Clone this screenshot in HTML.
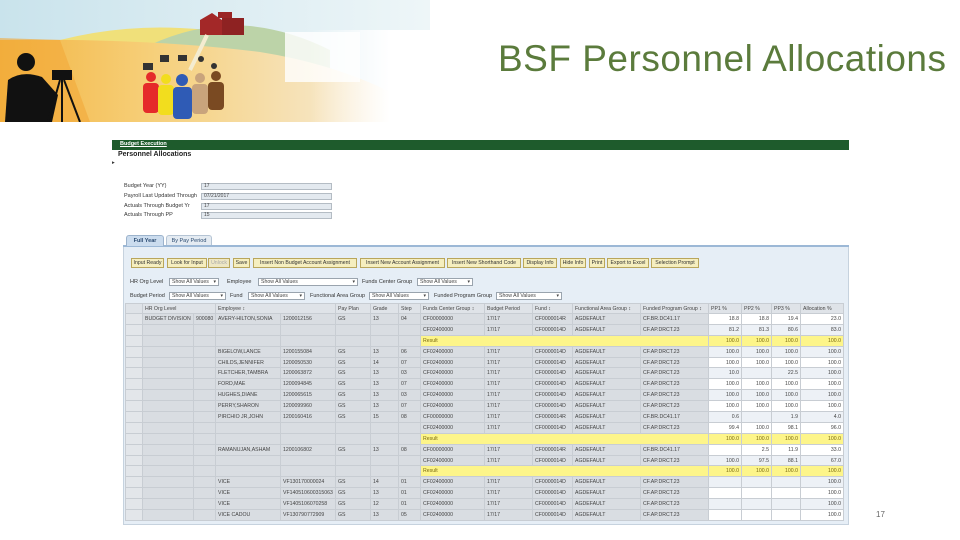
<!DOCTYPE html>
<html><head><meta charset="utf-8">
<style>
*{margin:0;padding:0;box-sizing:border-box}
body{width:960px;height:540px;background:#fff;position:relative;overflow:hidden;font-family:"Liberation Sans",sans-serif;}
.a{position:absolute}
.t{font-size:5.5px;color:#333;white-space:nowrap}
.btn{position:absolute;top:258px;height:10px;background:#f5eebf;border:1px solid #b9a65c;font-size:5.2px;line-height:8px;text-align:center;color:#333;white-space:nowrap;overflow:hidden}
.sel{position:absolute;height:8px;background:#fff;border:1px solid #9aa4ae;font-size:5.2px;line-height:6px;padding-left:2px;color:#444}
.sel:after{content:"▾";position:absolute;right:2px;top:0;font-size:5px}
table{position:absolute;left:125px;top:303px;border-collapse:collapse;table-layout:fixed;width:718px;font-size:5.2px;color:#444}
td{height:10.9px;border:1px solid #c8cdd3;padding:0 2px;white-space:nowrap;overflow:hidden;background:#d9dde2;line-height:8px}
tr.h td{background:#dfe3e8;height:10px}
td.n{text-align:right;background:#fff}
tr:nth-child(odd) td.n{background:#edf1f6}
tr.r td.y{background:#fdf58a;color:#7a6a10}
td.s{background:#e3e6ea}
.inp{position:absolute;left:201px;width:131px;height:7px;background:#e3e9ef;border:1px solid #b4bcc4;font-size:5px;line-height:5px;padding-left:2px;color:#444}
</style></head><body>
<svg class="a" style="left:0;top:0" width="430" height="122" viewBox="0 0 430 122">
<defs>
<linearGradient id="sky" x1="0" y1="0" x2="1" y2="0"><stop offset="0" stop-color="#c9e3ec"/><stop offset="1" stop-color="#eef6f8"/></linearGradient>
<linearGradient id="hill" x1="0" y1="0" x2="1" y2="0"><stop offset="0" stop-color="#f3b542"/><stop offset="0.35" stop-color="#f6cf79"/><stop offset="0.7" stop-color="#f6e2b8"/><stop offset="1" stop-color="#fbf3e6"/></linearGradient>
<linearGradient id="fade" x1="0" y1="0" x2="1" y2="0"><stop offset="0.4" stop-color="#fff" stop-opacity="0"/><stop offset="0.8" stop-color="#fff" stop-opacity="1"/></linearGradient>
</defs>
<rect width="430" height="122" fill="url(#sky)"/>
<path d="M60 40 Q120 25 180 28 Q230 30 260 40 L260 60 L60 60Z" fill="#f0e07a"/>
<path d="M150 45 Q200 22 250 26 Q290 30 330 50 L330 90 L150 90Z" fill="#bcd3a8"/>
<path d="M0 40 Q150 38 260 52 Q360 68 430 115 L430 122 L0 122Z" fill="url(#hill)"/>
<path d="M0 38 L60 40 L90 122 L0 122Z" fill="#f2a838" opacity="0.6"/>
<rect x="230" y="30" width="200" height="92" fill="url(#fade)"/>
<rect x="285" y="32" width="75" height="50" fill="#fff" opacity="0.8"/>
<path d="M200 20 L212 13 L222 20 L222 35 L200 35Z" fill="#a32828"/>
<rect x="222" y="18" width="22" height="17" fill="#8e2222"/>
<rect x="218" y="12" width="14" height="6" fill="#9a2525"/>
<path d="M207 35 Q200 50 190 70" stroke="#f4ecd0" stroke-width="4" fill="none"/>
<g fill="#111">
<circle cx="26" cy="62" r="9"/><path d="M5 122 L8 80 Q22 70 42 77 L58 95 L52 122Z"/>
<rect x="52" y="70" width="20" height="10"/><path d="M60 80 L48 122 M62 80 L62 122 M64 80 L80 122" stroke="#111" stroke-width="2"/>
</g>
<g><circle cx="151" cy="77" r="5" fill="#e52a2a"/><rect x="143" y="83" width="16" height="30" rx="4" fill="#e52a2a"/>
<circle cx="166" cy="79" r="5" fill="#f2dd1e"/><rect x="158" y="85" width="16" height="30" rx="4" fill="#f2dd1e"/>
<circle cx="182" cy="80" r="6" fill="#2f5bb5"/><rect x="173" y="87" width="19" height="32" rx="4" fill="#2f5bb5"/>
<circle cx="200" cy="78" r="5" fill="#c9a47c"/><rect x="192" y="84" width="16" height="30" rx="4" fill="#c9a47c"/>
<circle cx="216" cy="76" r="5" fill="#7a4a22"/><rect x="208" y="82" width="16" height="28" rx="4" fill="#7a4a22"/></g>
<g fill="#333"><rect x="143" y="63" width="10" height="7"/><rect x="160" y="55" width="9" height="7"/><rect x="178" y="55" width="9" height="6"/><circle cx="201" cy="59" r="3"/><circle cx="214" cy="66" r="3"/></g>
</svg>
<div class="a" style="left:498px;top:38px;font-size:37px;color:#5b7b3c;letter-spacing:0.5px;white-space:nowrap">BSF Personnel Allocations</div>

<div class="a" style="left:112px;top:140px;width:737px;height:10px;background:#1e5b2c"></div>
<div class="a t" style="left:120px;top:141px;color:#fff;text-decoration:underline;font-weight:bold">Budget Execution</div>
<div class="a" style="left:118px;top:151px;font-size:7px;font-weight:bold;color:#222">Personnel Allocations</div>
<div class="a t" style="left:112px;top:160px">▸</div>

<div class="a t" style="left:124px;top:183px">Budget Year (YY)</div><div class="inp" style="top:183px">17</div>
<div class="a t" style="left:124px;top:193px">Payroll Last Updated Through</div><div class="inp" style="top:193px">07/21/2017</div>
<div class="a t" style="left:124px;top:203px">Actuals Through Budget Yr</div><div class="inp" style="top:203px">17</div>
<div class="a t" style="left:124px;top:212px">Actuals Through PP</div><div class="inp" style="top:212px">15</div>

<div class="a" style="left:123px;top:245px;width:726px;height:280px;background:#e6eef6;border:1px solid #c6d2de"></div>
<div class="a" style="left:123px;top:245px;width:726px;height:2px;background:#9cb8d6"></div>
<div class="a t" style="left:126px;top:235px;width:38px;height:11px;background:#cbdcee;border:1px solid #9cb3cc;border-bottom:none;border-radius:3px 3px 0 0;text-align:center;line-height:10px;font-weight:bold;color:#2a4a70">Full Year</div>
<div class="a t" style="left:166px;top:235px;width:46px;height:10px;background:#e4ebf2;border:1px solid #b5c4d4;border-bottom:none;border-radius:3px 3px 0 0;text-align:center;line-height:10px;color:#2a4a70">By Pay Period</div>

<div class="btn" style="left:131px;width:33px">Input Ready</div>
<div class="btn" style="left:167px;width:40px">Look for Input</div>
<div class="btn" style="left:208px;width:22px;color:#aaa;background:#eee7c4">Unlock</div>
<div class="btn" style="left:233px;width:17px">Save</div>
<div class="btn" style="left:253px;width:104px">Insert Non Budget Account Assignment</div>
<div class="btn" style="left:360px;width:85px">Insert New Account Assignment</div>
<div class="btn" style="left:447px;width:74px">Insert New Shorthand Code</div>
<div class="btn" style="left:523px;width:34px">Display Info</div>
<div class="btn" style="left:560px;width:26px">Hide Info</div>
<div class="btn" style="left:589px;width:16px">Print</div>
<div class="btn" style="left:607px;width:42px">Export to Excel</div>
<div class="btn" style="left:651px;width:48px">Selection Prompt</div>

<div class="a t" style="left:130px;top:279px">HR Org Level</div><div class="sel" style="left:169px;top:278px;width:50px">Show All Values</div>
<div class="a t" style="left:227px;top:279px">Employee</div><div class="sel" style="left:258px;top:278px;width:100px">Show All Values</div>
<div class="a t" style="left:362px;top:279px">Funds Center Group</div><div class="sel" style="left:417px;top:278px;width:56px">Show All Values</div>
<div class="a t" style="left:130px;top:293px">Budget Period</div><div class="sel" style="left:169px;top:292px;width:57px">Show All Values</div>
<div class="a t" style="left:230px;top:293px">Fund</div><div class="sel" style="left:248px;top:292px;width:57px">Show All Values</div>
<div class="a t" style="left:310px;top:293px">Functional Area Group</div><div class="sel" style="left:369px;top:292px;width:60px">Show All Values</div>
<div class="a t" style="left:434px;top:293px">Funded Program Group</div><div class="sel" style="left:496px;top:292px;width:66px">Show All Values</div>

<table>
<colgroup><col style="width:17px"><col style="width:51px"><col style="width:22px"><col style="width:65px"><col style="width:55px"><col style="width:35px"><col style="width:28px"><col style="width:22px"><col style="width:64px"><col style="width:48px"><col style="width:40px"><col style="width:68px"><col style="width:68px"><col style="width:33px"><col style="width:30px"><col style="width:29px"><col style="width:43px"></colgroup>
<tr class="h"><td class="s"></td><td colspan="2">HR Org Level</td><td colspan="2">Employee ↕</td><td>Pay Plan</td><td>Grade</td><td>Step</td><td>Funds Center Group ↕</td><td>Budget Period</td><td>Fund ↕</td><td>Functional Area Group ↕</td><td>Funded Program Group ↕</td><td>PP1 %</td><td>PP2 %</td><td>PP3 %</td><td>Allocation %</td></tr>
<tr><td class="s"></td><td>BUDGET DIVISION</td><td>900080</td><td>AVERY-HILTON,SONIA</td><td>1200012156</td><td>GS</td><td>13</td><td>04</td><td>CF00000000</td><td>17/17</td><td>CF0000014R</td><td>AGDEFAULT</td><td>CF.BR.DC41.17</td><td class="n">18.8</td><td class="n">18.8</td><td class="n">19.4</td><td class="n">23.0</td></tr>
<tr><td class="s"></td><td></td><td></td><td></td><td></td><td></td><td></td><td></td><td>CF02400000</td><td>17/17</td><td>CF0000014D</td><td>AGDEFAULT</td><td>CF.AP.DRCT.23</td><td class="n">81.2</td><td class="n">81.3</td><td class="n">80.6</td><td class="n">83.0</td></tr>
<tr class="r"><td class="s"></td><td></td><td></td><td></td><td></td><td></td><td></td><td></td><td class="y" colspan="5">Result</td><td class="y" style="text-align:right">100.0</td><td class="y" style="text-align:right">100.0</td><td class="y" style="text-align:right">100.0</td><td class="y" style="text-align:right">100.0</td></tr>
<tr><td class="s"></td><td></td><td></td><td>BIGELOW,LANCE</td><td>1200155084</td><td>GS</td><td>13</td><td>06</td><td>CF02400000</td><td>17/17</td><td>CF0000014D</td><td>AGDEFAULT</td><td>CF.AP.DRCT.23</td><td class="n">100.0</td><td class="n">100.0</td><td class="n">100.0</td><td class="n">100.0</td></tr>
<tr><td class="s"></td><td></td><td></td><td>CHILDS,JENNIFER</td><td>1200050530</td><td>GS</td><td>14</td><td>07</td><td>CF02400000</td><td>17/17</td><td>CF0000014D</td><td>AGDEFAULT</td><td>CF.AP.DRCT.23</td><td class="n">100.0</td><td class="n">100.0</td><td class="n">100.0</td><td class="n">100.0</td></tr>
<tr><td class="s"></td><td></td><td></td><td>FLETCHER,TAMBRA</td><td>1200063872</td><td>GS</td><td>13</td><td>03</td><td>CF02400000</td><td>17/17</td><td>CF0000014D</td><td>AGDEFAULT</td><td>CF.AP.DRCT.23</td><td class="n">10.0</td><td class="n"></td><td class="n">22.5</td><td class="n">100.0</td></tr>
<tr><td class="s"></td><td></td><td></td><td>FORD,MAE</td><td>1200094845</td><td>GS</td><td>13</td><td>07</td><td>CF02400000</td><td>17/17</td><td>CF0000014D</td><td>AGDEFAULT</td><td>CF.AP.DRCT.23</td><td class="n">100.0</td><td class="n">100.0</td><td class="n">100.0</td><td class="n">100.0</td></tr>
<tr><td class="s"></td><td></td><td></td><td>HUGHES,DIANE</td><td>1200065615</td><td>GS</td><td>13</td><td>03</td><td>CF02400000</td><td>17/17</td><td>CF0000014D</td><td>AGDEFAULT</td><td>CF.AP.DRCT.23</td><td class="n">100.0</td><td class="n">100.0</td><td class="n">100.0</td><td class="n">100.0</td></tr>
<tr><td class="s"></td><td></td><td></td><td>PERRY,SHARON</td><td>1200099960</td><td>GS</td><td>13</td><td>07</td><td>CF02400000</td><td>17/17</td><td>CF0000014D</td><td>AGDEFAULT</td><td>CF.AP.DRCT.23</td><td class="n">100.0</td><td class="n">100.0</td><td class="n">100.0</td><td class="n">100.0</td></tr>
<tr><td class="s"></td><td></td><td></td><td>PIRCHIO JR,JOHN</td><td>1200160416</td><td>GS</td><td>15</td><td>08</td><td>CF00000000</td><td>17/17</td><td>CF0000014R</td><td>AGDEFAULT</td><td>CF.BR.DC41.17</td><td class="n">0.6</td><td class="n"></td><td class="n">1.9</td><td class="n">4.0</td></tr>
<tr><td class="s"></td><td></td><td></td><td></td><td></td><td></td><td></td><td></td><td>CF02400000</td><td>17/17</td><td>CF0000014D</td><td>AGDEFAULT</td><td>CF.AP.DRCT.23</td><td class="n">99.4</td><td class="n">100.0</td><td class="n">98.1</td><td class="n">96.0</td></tr>
<tr class="r"><td class="s"></td><td></td><td></td><td></td><td></td><td></td><td></td><td></td><td class="y" colspan="5">Result</td><td class="y" style="text-align:right">100.0</td><td class="y" style="text-align:right">100.0</td><td class="y" style="text-align:right">100.0</td><td class="y" style="text-align:right">100.0</td></tr>
<tr><td class="s"></td><td></td><td></td><td>RAMANUJAN,ASHAM</td><td>1200106802</td><td>GS</td><td>13</td><td>08</td><td>CF00000000</td><td>17/17</td><td>CF0000014R</td><td>AGDEFAULT</td><td>CF.BR.DC41.17</td><td class="n"></td><td class="n">2.5</td><td class="n">11.9</td><td class="n">33.0</td></tr>
<tr><td class="s"></td><td></td><td></td><td></td><td></td><td></td><td></td><td></td><td>CF02400000</td><td>17/17</td><td>CF0000014D</td><td>AGDEFAULT</td><td>CF.AP.DRCT.23</td><td class="n">100.0</td><td class="n">97.5</td><td class="n">88.1</td><td class="n">67.0</td></tr>
<tr class="r"><td class="s"></td><td></td><td></td><td></td><td></td><td></td><td></td><td></td><td class="y" colspan="5">Result</td><td class="y" style="text-align:right">100.0</td><td class="y" style="text-align:right">100.0</td><td class="y" style="text-align:right">100.0</td><td class="y" style="text-align:right">100.0</td></tr>
<tr><td class="s"></td><td></td><td></td><td>VICE</td><td>VF130170000024</td><td>GS</td><td>14</td><td>01</td><td>CF02400000</td><td>17/17</td><td>CF0000014D</td><td>AGDEFAULT</td><td>CF.AP.DRCT.23</td><td class="n"></td><td class="n"></td><td class="n"></td><td class="n">100.0</td></tr>
<tr><td class="s"></td><td></td><td></td><td>VICE</td><td>VF140510600315063</td><td>GS</td><td>13</td><td>01</td><td>CF02400000</td><td>17/17</td><td>CF0000014D</td><td>AGDEFAULT</td><td>CF.AP.DRCT.23</td><td class="n"></td><td class="n"></td><td class="n"></td><td class="n">100.0</td></tr>
<tr><td class="s"></td><td></td><td></td><td>VICE</td><td>VF1405106070258</td><td>GS</td><td>12</td><td>01</td><td>CF02400000</td><td>17/17</td><td>CF0000014D</td><td>AGDEFAULT</td><td>CF.AP.DRCT.23</td><td class="n"></td><td class="n"></td><td class="n"></td><td class="n">100.0</td></tr>
<tr><td class="s"></td><td></td><td></td><td>VICE CADOU</td><td>VF130790772909</td><td>GS</td><td>13</td><td>05</td><td>CF02400000</td><td>17/17</td><td>CF0000014D</td><td>AGDEFAULT</td><td>CF.AP.DRCT.23</td><td class="n"></td><td class="n"></td><td class="n"></td><td class="n">100.0</td></tr>
</table>
<div class="a" style="left:876px;top:510px;font-size:8px;color:#666">17</div>
</body></html>
